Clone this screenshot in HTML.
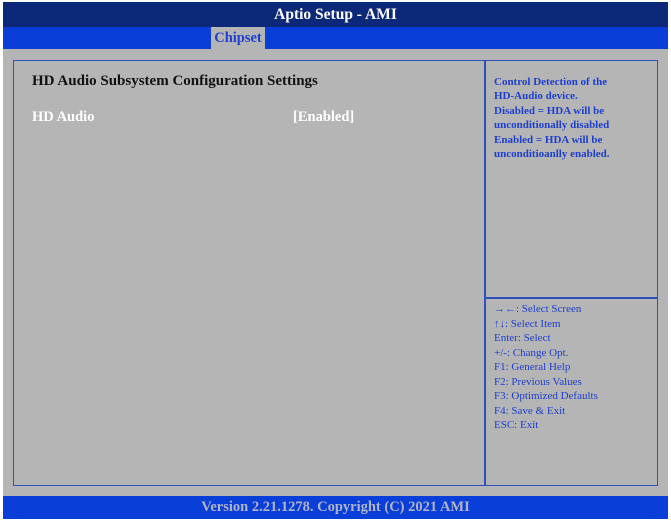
<!DOCTYPE html>
<html><head><meta charset="utf-8"><style>
*{margin:0;padding:0;box-sizing:border-box}
body{width:671px;height:522px;background:#fff;position:relative;overflow:hidden;font-family:"Liberation Serif",serif}
.bg{position:absolute;left:3px;top:2px;width:665px;height:517px;background:#b5b5b5}
.title{position:absolute;left:3px;top:2px;width:665px;height:25px;background:#0c2878;color:#fff;font-weight:bold;font-size:15.5px;text-align:center;line-height:25px}
.tabs{position:absolute;left:3px;top:27px;width:665px;height:22px;background:#0a3ed8}
.tab{position:absolute;left:208px;top:0;width:54px;height:22px;background:#b5b5b5;color:#1d3fcf;font-weight:bold;font-size:14.5px;text-align:center;line-height:22px}
.box{position:absolute;left:13px;top:60px;width:645px;height:426px;border:1.5px solid #2f4fbf}
.vdiv{position:absolute;left:484px;top:60px;width:1.5px;height:426px;background:#2f4fbf}
.hdiv{position:absolute;left:484px;top:297px;width:174px;height:1.5px;background:#2f4fbf}
.h{position:absolute;left:32px;top:73px;font-weight:bold;font-size:15px;color:#111}
.it{position:absolute;top:109px;font-weight:bold;font-size:14.5px;color:#fff}
.help{position:absolute;left:494px;top:75px;font-weight:bold;font-size:11px;line-height:14.4px;color:#1d3fcf}
.keys{position:absolute;left:494px;top:302px;font-size:11px;line-height:14.5px;color:#1d3fcf}
.foot{position:absolute;left:3px;top:496px;width:665px;height:23px;background:#0a3ed8;color:#b0b4c8;font-weight:bold;font-size:14.5px;text-align:center;line-height:23px}
</style></head><body>
<div class="bg"></div>
<div class="title">Aptio Setup - AMI</div>
<div class="tabs"><div class="tab">Chipset</div></div>
<div class="box"></div><div class="vdiv"></div><div class="hdiv"></div>
<div class="h">HD Audio Subsystem Configuration Settings</div>
<div class="it" style="left:32px">HD Audio</div>
<div class="it" style="left:293px">[Enabled]</div>
<div class="help">Control Detection of the<br>HD-Audio device.<br>Disabled = HDA will be<br>unconditionally disabled<br>Enabled = HDA will be<br>unconditioanlly enabled.</div>
<div class="keys">→←: Select Screen<br>↑↓: Select Item<br>Enter: Select<br>+/-: Change Opt.<br>F1: General Help<br>F2: Previous Values<br>F3: Optimized Defaults<br>F4: Save &amp; Exit<br>ESC: Exit</div>
<div class="foot">Version 2.21.1278. Copyright (C) 2021 AMI</div>
</body></html>
